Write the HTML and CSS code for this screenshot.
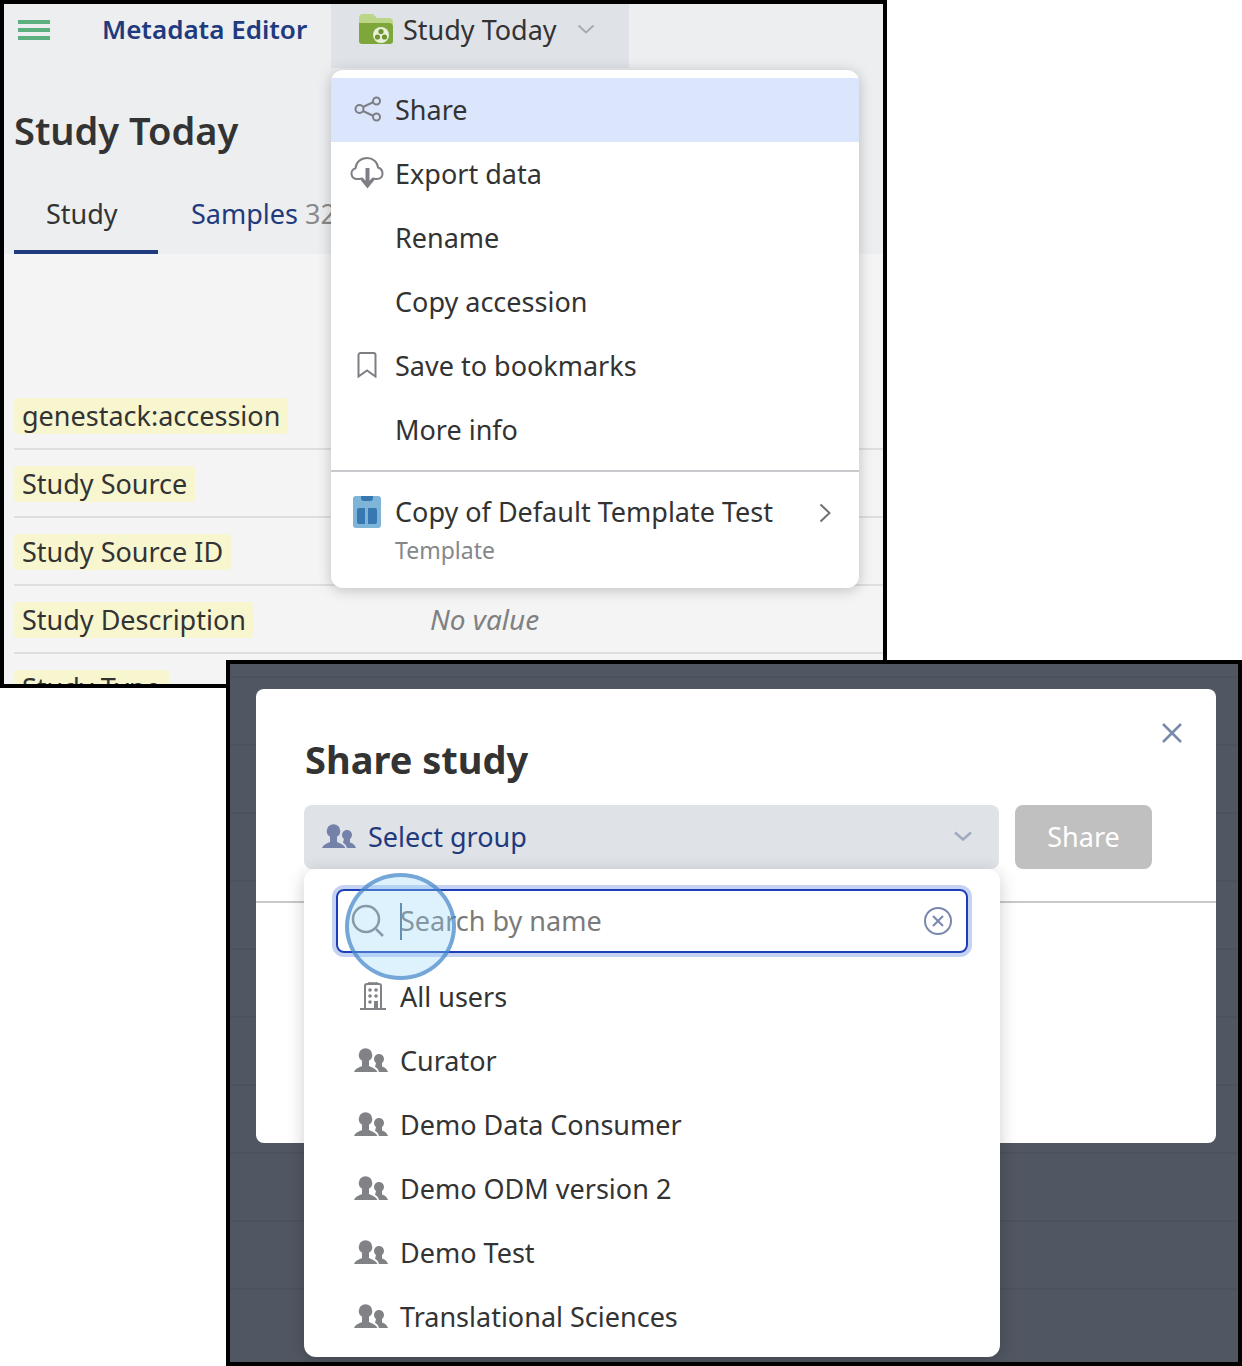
FILE: index.html
```html
<!DOCTYPE html>
<html lang="en">
<head>
    <meta charset="UTF-8">
    <title>Study Today - Share study</title>
    <link rel="stylesheet" href="styles.css">
</head>
<body>
    <svg class="defs" aria-hidden="true">
        <symbol id="people" viewBox="0 0 34 24">
            <circle cx="11.500" cy="7" r="6.800"/>
            <circle cx="25" cy="11" r="5"/>
            <path d="M0 24c1-3 4-4.500 8-6v-5h7v5c4 1.500 7 3 8.500 6z"/>
            <path d="M22 15h6v3.500c3 1 5 2.500 6 5.500H25c-.8-2.500-2-4-4-5.200z"/>
        </symbol>
    </svg>

    <section class="window window-study">
        <div class="top-area">
            <div class="topbar">
                <div class="burger"><span></span><span></span><span></span></div>
                <div class="app-name">Metadata Editor</div>
                <div class="study-tab">
                    <svg class="folder" width="34" height="30" viewBox="0 0 34 30">
                        <path d="M0 4a4 4 0 0 1 4-4h10l4 4h12a4 4 0 0 1 4 4v4H0z" fill="#bcd688"/>
                        <path d="M0 9h30a4 4 0 0 1 4 4v14a3 3 0 0 1-3 3H3a3 3 0 0 1-3-3z" fill="#7da73a"/>
                        <circle cx="22" cy="21" r="8" fill="#e9f0da"/>
                        <circle cx="22" cy="17.500" r="2.600" fill="#6d9431"/>
                        <circle cx="18.500" cy="23" r="2.600" fill="#6d9431"/>
                        <circle cx="25.500" cy="23" r="2.600" fill="#6d9431"/>
                    </svg>
                    <span class="study-name">Study Today</span>
                    <svg class="chevron" width="18" height="10" viewBox="0 0 18 10"><path d="M1.500 1.500 9 8.500l7.500-7" fill="none" stroke="#a5abb3" stroke-width="2"/></svg>
                </div>
            </div>
            <h1 class="page-title">Study Today</h1>
            <div class="tabs">
                <div class="tab tab-active">Study</div>
                <div class="tab">Samples <span class="count">32</span></div>
            </div>
        </div>

        <div class="attrs">
            <div class="attr"><span class="tag">genestack:accession</span></div>
            <div class="attr"><span class="tag">Study Source</span></div>
            <div class="attr"><span class="tag">Study Source ID</span></div>
            <div class="attr"><span class="tag">Study Description</span><span class="no-value">No value</span></div>
            <div class="attr"><span class="tag">Study Type</span></div>
        </div>

        <div class="menu">
            <div class="menu-item menu-item-on">
                <span class="menu-icon">
                    <svg class="share-icon" width="28" height="26" viewBox="0 0 28 26" fill="none" stroke="#7d7f84" stroke-width="2">
                        <circle cx="5.500" cy="13" r="4"/><circle cx="22.500" cy="5" r="3.500"/><circle cx="22.500" cy="21" r="3.500"/>
                        <path d="m9 11 10.500-5M9 15l10.500 5"/>
                    </svg>
                </span>
                Share
            </div>
            <div class="menu-item">
                <span class="menu-icon">
                    <svg width="34" height="34" viewBox="0 0 34 34" fill="none">
                        <path d="M10 23H7a5.500 5.500 0 0 1-1.500-10.800C6 6 11 2 17 2c6 0 10.500 4 11 9.500 3 1 4.500 3.500 4.500 6 0 3-2 5.500-6 5.500h-2" stroke="#7d7f84" stroke-width="2"/>
                        <path d="M17.500 12v15" stroke="#7d7f84" stroke-width="4"/>
                        <path d="m9 22 8.500 10.500L26 22l-3.500-.5-5 5-5-5z" fill="#7d7f84"/>
                    </svg>
                </span>
                Export data
            </div>
            <div class="menu-item"><span class="menu-icon"></span>Rename</div>
            <div class="menu-item"><span class="menu-icon"></span>Copy accession</div>
            <div class="menu-item">
                <span class="menu-icon">
                    <svg width="20" height="26" viewBox="0 0 20 26"><path d="M1.500 3a2 2 0 0 1 2-2h13a2 2 0 0 1 2 2v21.500L10 18.500 1.500 24.500z" fill="none" stroke="#7d7f84" stroke-width="2"/></svg>
                </span>
                Save to bookmarks
            </div>
            <div class="menu-item"><span class="menu-icon"></span>More info</div>
            <div class="menu-sep"></div>
            <div class="menu-template">
                <span class="menu-icon">
                    <svg width="28" height="32" viewBox="0 0 28 32">
                        <rect width="28" height="32" rx="3" fill="#7db4d8"/>
                        <path d="M8 0h12v2a3 3 0 0 1-3 3h-6a3 3 0 0 1-3-3z" fill="#3878b0"/>
                        <path d="M4 14a2 2 0 0 1 2-2h6v16H6a2 2 0 0 1-2-2zM15 12h7a2 2 0 0 1 2 2v12a2 2 0 0 1-2 2h-7z" fill="#3878b0"/>
                    </svg>
                </span>
                <div class="template-text">
                    <div>Copy of Default Template Test</div>
                    <div class="template-kind">Template</div>
                </div>
                <svg class="template-arrow" width="12" height="20" viewBox="0 0 12 20"><path d="m1.500 1.500 9 8.500-9 8.500" fill="none" stroke="#6e7075" stroke-width="2"/></svg>
            </div>
        </div>
    </section>

    <section class="window window-share">
        <div class="dialog">
            <svg class="close" width="22" height="22" viewBox="0 0 22 22"><path d="m2 2 18 18M20 2 2 20" stroke="#7a88ae" stroke-width="2.500"/></svg>
            <h2 class="dialog-title">Share study</h2>
            <div class="controls">
                <div class="select">
                    <svg class="people people-blue" width="34" height="24"><use href="#people"/></svg>
                    <span class="select-label">Select group</span>
                    <svg class="select-chevron" width="18" height="10" viewBox="0 0 18 10"><path d="M1 1.500 9 8.500l8-7" fill="none" stroke="#a0a8bf" stroke-width="2.500"/></svg>
                </div>
                <div class="share-btn">Share</div>
            </div>
            <div class="dialog-line"></div>

            <div class="dropdown">
                <div class="search">
                    <svg class="search-icon" width="34" height="34" viewBox="0 0 34 34" fill="none" stroke="#7d7f84" stroke-width="2.500"><circle cx="15" cy="15" r="13"/><path d="m25 25 7 7"/></svg>
                    <span class="placeholder">Search by name</span>
                    <svg class="search-clear" width="28" height="28" viewBox="0 0 28 28" fill="none" stroke="#7a88ae" stroke-width="2"><circle cx="14" cy="14" r="13"/><path d="m9 9 10 10M19 9 9 19"/></svg>
                </div>
                <div class="caret"></div>
                <div class="group-list">
                    <div class="group">
                        <span class="group-icon">
                            <svg class="building" width="26" height="28" viewBox="0 0 26 28" fill="none" stroke="#808285" stroke-width="2">
                                <path d="M0 27h26M5 27V4a2 2 0 0 1 2-2h12a2 2 0 0 1 2 2v23"/>
                                <path d="M9 2V0h8v2" stroke-width="1.500"/>
                                <g fill="#808285" stroke="none">
                                    <circle cx="10" cy="8" r="1.800"/><circle cx="16" cy="8" r="1.800"/>
                                    <circle cx="10" cy="14" r="1.800"/><circle cx="16" cy="14" r="1.800"/>
                                    <circle cx="10" cy="20" r="1.800"/><rect x="14" y="19" width="4" height="8"/>
                                </g>
                            </svg>
                        </span>
                        All users
                    </div>
                    <div class="group"><span class="group-icon"><svg class="people" width="34" height="24"><use href="#people"/></svg></span>Curator</div>
                    <div class="group"><span class="group-icon"><svg class="people" width="34" height="24"><use href="#people"/></svg></span>Demo Data Consumer</div>
                    <div class="group"><span class="group-icon"><svg class="people" width="34" height="24"><use href="#people"/></svg></span>Demo ODM version 2</div>
                    <div class="group"><span class="group-icon"><svg class="people" width="34" height="24"><use href="#people"/></svg></span>Demo Test</div>
                    <div class="group"><span class="group-icon"><svg class="people" width="34" height="24"><use href="#people"/></svg></span>Translational Sciences</div>
                </div>
                <div class="spot"></div>
            </div>
        </div>
    </section>
</body>
</html>
```

FILE: styles.css
```css
* {
    box-sizing: border-box;
}
html, body {
    margin: 0;
    height: 1366px;
    background-color: #fff;
}
body {
    position: relative;
    overflow: hidden;
    font-family: "Noto Sans", Arial, sans-serif;
    font-size: 27px;
    color: #333;
}
.defs {
    position: absolute;
    width: 0;
    height: 0;
}
.window {
    position: absolute;
    border: 4px solid #000;
    overflow: hidden;
}

/* study window */
.window-study {
    left: 0;
    top: 0;
    width: 887px;
    height: 688px;
    background-color: #f4f4f4;
}
.top-area {
    height: 250px;
    background-color: #eceef0;
}
.topbar {
    display: flex;
    align-items: center;
    height: 64px;
}
.burger {
    display: flex;
    flex-direction: column;
    gap: 4px;
    width: 32px;
    margin-left: 14px;
    margin-top: -12px;
}
.burger span {
    height: 4px;
    background-color: #5cb07f;
}
.app-name {
    width: 229px;
    margin-left: 52px;
    margin-top: -14px;
    font-size: 26px;
    font-weight: 600;
    color: #1f3a7d;
}
.study-tab {
    display: flex;
    align-items: center;
    width: 298px;
    height: 64px;
    padding: 0 0 14px 28px;
    background-color: #dfe2e7;
}
.study-name {
    margin-left: 10px;
}
.chevron {
    margin-left: 20px;
}
.page-title {
    height: 122px;
    margin: 0 0 0 10px;
    padding-top: 35px;
    font-size: 38px;
    line-height: 54px;
    font-weight: 600;
}
.tabs {
    display: flex;
    height: 64px;
    margin-left: 10px;
}
.tab {
    padding: 0 33px;
    line-height: 48px;
    color: #1f3a7d;
    white-space: nowrap;
}
.tab-active {
    width: 144px;
    padding: 0 0 0 32px;
    color: #333;
    border-bottom: 4px solid #1f3a7d;
}
.count {
    color: #8a8a8a;
}
.attrs {
    margin: 128px 0 0 10px;
}
.attr {
    display: flex;
    align-items: center;
    height: 68px;
    padding-top: 2px;
    border-bottom: 2px solid #dedede;
}
.tag {
    height: 36px;
    padding: 0 8px;
    line-height: 36px;
    background-color: #f7f6cf;
    border-radius: 4px;
}
.no-value {
    position: absolute;
    left: 426px;
    margin-top: -2px;
    font-size: 28px;
    font-style: italic;
    color: #808080;
}

/* actions menu */
.menu {
    position: absolute;
    left: 327px;
    top: 66px;
    width: 528px;
    height: 518px;
    padding-top: 8px;
    background-color: #fff;
    border-radius: 12px;
    box-shadow: 0 2px 14px rgba(0, 0, 0, .22);
}
.menu-item {
    display: flex;
    align-items: center;
    height: 64px;
    padding-bottom: 2px;
}
.menu-item-on {
    background-color: #dbe5fb;
}
.menu-icon {
    display: flex;
    justify-content: center;
    flex: none;
    width: 48px;
    margin: 0 4px 0 12px;
}
.share-icon {
    margin-left: 2px;
}
.menu-sep {
    height: 2px;
    margin-top: 8px;
    background-color: #c9c9cd;
}
.menu-template {
    display: flex;
    align-items: flex-start;
    padding-top: 21px;
    line-height: 38px;
}
.menu-template .menu-icon {
    margin-top: 3px;
}
.template-kind {
    font-size: 23px;
    color: #85878a;
}
.template-arrow {
    margin: 10px 0 0 46px;
}

/* share window */
.window-share {
    left: 226px;
    top: 660px;
    width: 1016px;
    height: 706px;
    padding: 25px 0 0 26px;
    background-color: #515762;
    background-image: repeating-linear-gradient(to bottom, transparent 0, transparent 66px, #4c525d 66px, #4c525d 68px);
    background-position: 0 -54px;
}
.dialog {
    position: relative;
    width: 960px;
    height: 454px;
    background-color: #fff;
    border-radius: 8px;
}
.close {
    position: absolute;
    left: 905px;
    top: 33px;
}
.dialog-title {
    height: 116px;
    margin: 0 0 0 49px;
    padding-top: 42px;
    font-size: 38px;
    line-height: 56px;
    font-weight: 700;
}
.controls {
    display: flex;
    gap: 16px;
    margin-left: 48px;
}
.select {
    display: flex;
    align-items: center;
    width: 695px;
    height: 64px;
    padding: 0 27px 2px 18px;
    background-color: #dfe2e7;
    border-radius: 8px;
}
.people {
    fill: #808285;
}
.people-blue {
    fill: #7481a8;
}
.select-label {
    flex: 1;
    margin-left: 12px;
    color: #1f3a7d;
}
.share-btn {
    width: 137px;
    height: 64px;
    line-height: 64px;
    text-align: center;
    color: #fff;
    background-color: #c0c0c0;
    border-radius: 8px;
}
.dialog-line {
    height: 2px;
    margin-top: 32px;
    background-color: #c9c9cd;
}
.dropdown {
    position: absolute;
    left: 48px;
    top: 180px;
    width: 696px;
    height: 488px;
    padding: 20px 32px 0;
    background-color: #fff;
    border-radius: 12px;
    box-shadow: 0 4px 18px rgba(0, 0, 0, .2);
}
.search {
    display: flex;
    align-items: center;
    height: 64px;
    padding: 0 14px 0 13px;
    border: 2px solid #1c3fb8;
    border-radius: 8px;
    box-shadow: 0 0 0 4px #c5d2f2;
}
.search-icon {
    flex: none;
}
.placeholder {
    flex: 1;
    margin: -2px 0 0 15px;
    color: #7a7a7a;
}
.caret {
    position: absolute;
    left: 96px;
    top: 34px;
    width: 2px;
    height: 37px;
    background-color: #4f6f8f;
}
.group-list {
    margin: 12px 0 0 -32px;
}
.group {
    display: flex;
    align-items: center;
    height: 64px;
    padding: 0 0 2px 50px;
}
.group-icon {
    display: flex;
    justify-content: center;
    flex: none;
    width: 34px;
    margin-right: 12px;
}
.building {
    margin-left: 4px;
}
.spot {
    position: absolute;
    left: 41px;
    top: 4px;
    width: 111px;
    height: 107px;
    border: 4px solid rgba(60, 125, 195, .65);
    border-radius: 50%;
    background-color: rgba(150, 215, 250, .32);
}
```
